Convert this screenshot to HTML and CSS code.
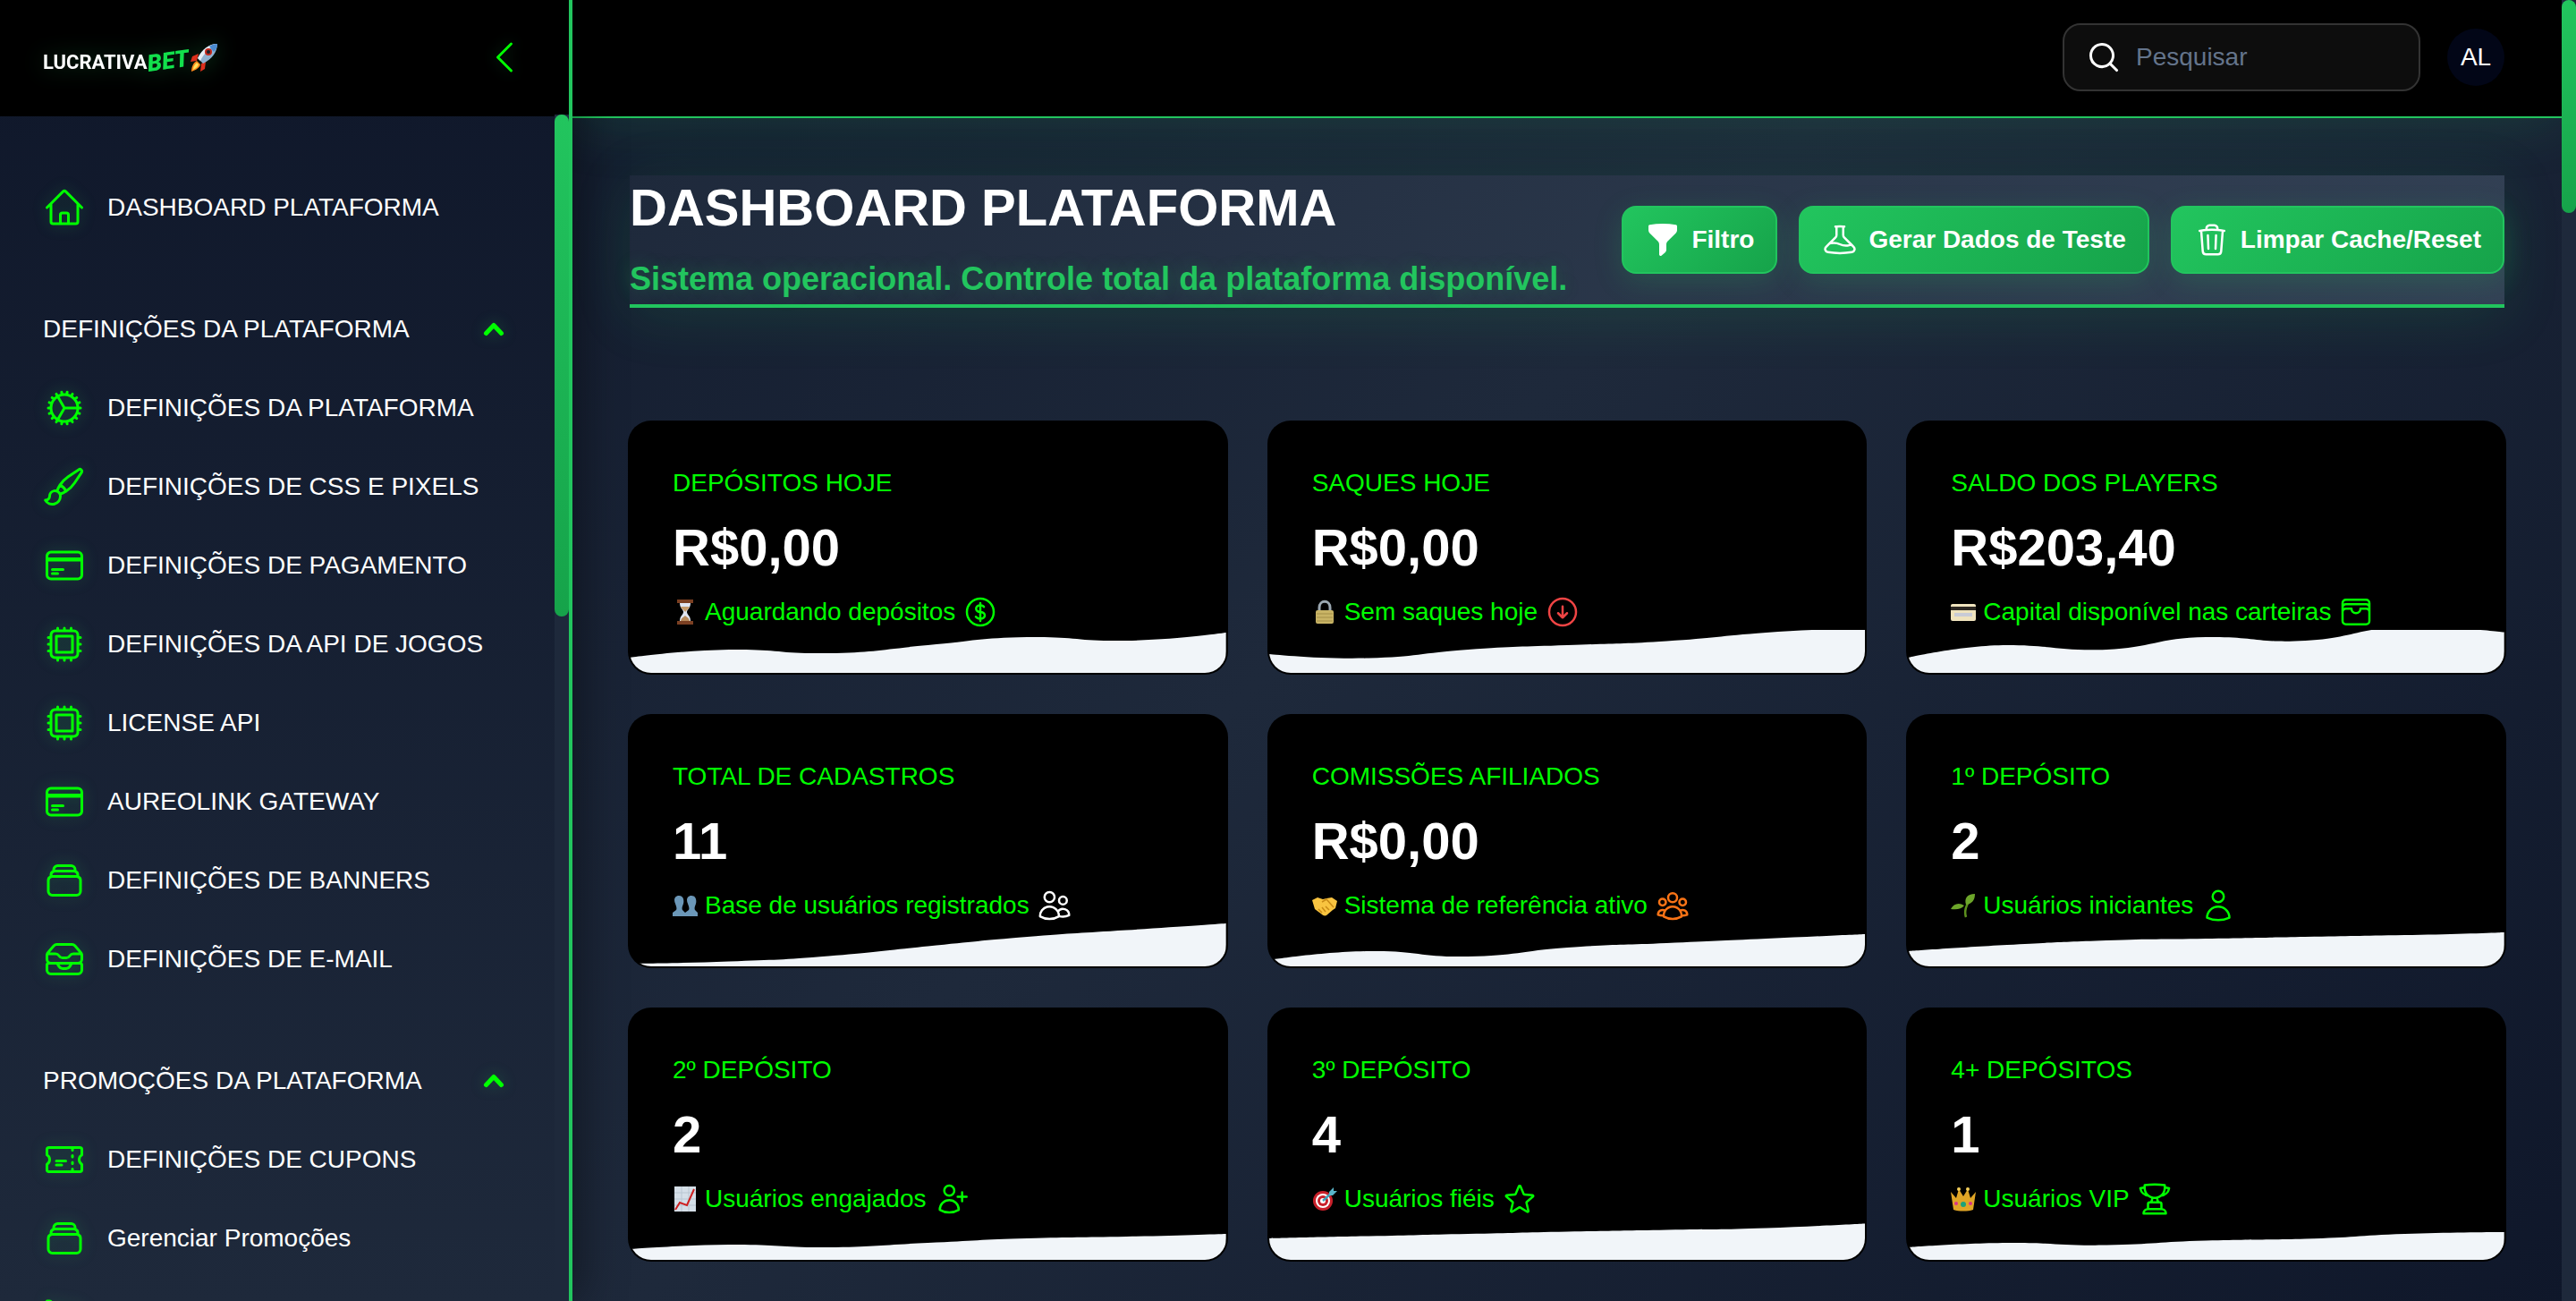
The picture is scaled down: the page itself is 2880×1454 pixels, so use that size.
FILE: index.html
```html
<!DOCTYPE html>
<html lang="pt-BR">
<head>
<meta charset="utf-8">
<meta name="viewport" content="width=device-width, initial-scale=1">
<title>Dashboard Plataforma</title>
<link rel="stylesheet" href="styles.css">
</head>
<body>
<svg class="sprite" aria-hidden="true">
  <symbol id="home" viewBox="0 0 24 24"><path d="M2.25 12l8.954-8.955c.44-.439 1.152-.439 1.591 0L21.75 12M4.5 9.75v10.125c0 .621.504 1.125 1.125 1.125H9.75v-4.875c0-.621.504-1.125 1.125-1.125h2.25c.621 0 1.125.504 1.125 1.125V21h4.125c.621 0 1.125-.504 1.125-1.125V9.75M8.25 21h8.25"/></symbol>
  <symbol id="cog" viewBox="0 0 24 24"><path d="M4.5 12a7.5 7.5 0 0015 0m-15 0a7.5 7.5 0 1115 0m-15 0H3m16.5 0H21m-1.5 0H12m-8.457 3.077l1.41-.513m14.095-5.13l1.41-.513M5.106 17.785l1.15-.964m11.49-9.642l1.149-.964M7.501 19.795l.75-1.3m7.5-12.99l.75-1.3m-6.063 16.658l.26-1.477m2.605-14.772l.26-1.477m0 17.726l-.26-1.477M10.698 4.614l-.26-1.477M16.5 19.794l-.75-1.299M7.5 4.205L12 12m6.894 5.785l-1.149-.964M6.256 7.178l-1.15-.964m15.352 8.864l-1.41-.513M4.954 9.435l-1.41-.514M12.002 12l-3.75 6.495"/></symbol>
  <symbol id="brush" viewBox="0 0 24 24"><path d="M9.53 16.122a3 3 0 00-5.78 1.128 2.25 2.25 0 01-2.4 2.245 4.5 4.5 0 008.4-2.245c0-.399-.078-.78-.22-1.128zm0 0a15.998 15.998 0 003.388-1.62m-5.043-.025a15.994 15.994 0 011.622-3.395m3.42 3.42a15.995 15.995 0 004.764-4.648l3.876-5.814a1.151 1.151 0 00-1.597-1.597L14.146 6.32a15.996 15.996 0 00-4.649 4.763m3.42 3.42a6.776 6.776 0 00-3.42-3.42"/></symbol>
  <symbol id="card" viewBox="0 0 24 24"><path d="M2.25 8.25h19.5M2.25 9h19.5m-16.5 5.25h6m-6 2.25h3m-3.75 3h15a2.25 2.25 0 002.25-2.25V6.75A2.25 2.25 0 0019.5 4.5h-15a2.25 2.25 0 00-2.25 2.25v10.5A2.25 2.25 0 004.5 19.5z"/></symbol>
  <symbol id="chip" viewBox="0 0 24 24"><path d="M8.25 3v1.5M4.5 8.25H3m18 0h-1.5M4.5 12H3m18 0h-1.5m-15 3.75H3m18 0h-1.5M8.25 19.5V21M12 3v1.5m0 15V21m3.75-18v1.5m0 15V21m-9-1.5h10.5a2.25 2.25 0 002.25-2.25V6.75a2.25 2.25 0 00-2.25-2.25H6.75A2.25 2.25 0 004.5 6.75v10.5a2.25 2.25 0 002.25 2.25zm.75-12h9v9h-9v-9z"/></symbol>
  <symbol id="stack" viewBox="0 0 24 24"><path d="M6 6.878V6a2.25 2.25 0 012.25-2.25h7.5A2.25 2.25 0 0118 6v.878m-12 0c.235-.083.487-.128.75-.128h10.5c.263 0 .515.045.75.128m-12 0A2.25 2.25 0 004.5 9v.878m13.5-3A2.25 2.25 0 0119.5 9v.878m0 0a2.246 2.246 0 00-.75-.128H5.25c-.263 0-.515.045-.75.128m15 0A2.25 2.25 0 0121 12v6a2.25 2.25 0 01-2.25 2.25H5.25A2.25 2.25 0 013 18v-6c0-.98.626-1.813 1.5-2.122"/></symbol>
  <symbol id="inbox" viewBox="0 0 24 24"><path d="M7.875 14.25l1.214 1.942a2.25 2.25 0 001.908 1.058h2.006c.776 0 1.497-.4 1.908-1.058l1.214-1.942M2.41 9h4.636a2.25 2.25 0 011.872 1.002l.164.246a2.25 2.25 0 001.872 1.002h2.092a2.25 2.25 0 001.872-1.002l.164-.246A2.25 2.25 0 0116.954 9h4.636M2.41 9a2.25 2.25 0 00-.16.832V12a2.25 2.25 0 002.25 2.25h15A2.25 2.25 0 0021.75 12V9.832c0-.287-.055-.57-.16-.832M2.41 9a2.25 2.25 0 01.382-.632l3.285-3.832a2.25 2.25 0 011.708-.786h8.43c.657 0 1.281.287 1.709.786l3.284 3.832c.163.19.291.404.382.632M4.5 20.25h15A2.25 2.25 0 0021.75 18v-2.625c0-.621-.504-1.125-1.125-1.125H3.375c-.621 0-1.125.504-1.125 1.125V18a2.25 2.25 0 002.25 2.25z"/></symbol>
  <symbol id="ticket" viewBox="0 0 24 24"><path d="M16.5 6v.75m0 3v.75m0 3v.75m0 3V18m-9-5.25h5.25M7.5 15h3M3.375 5.25c-.621 0-1.125.504-1.125 1.125v3.026a2.999 2.999 0 010 5.198v3.026c0 .621.504 1.125 1.125 1.125h17.25c.621 0 1.125-.504 1.125-1.125v-3.026a2.999 2.999 0 010-5.198V6.375c0-.621-.504-1.125-1.125-1.125H3.375z"/></symbol>
  <symbol id="cart" viewBox="0 0 24 24"><path d="M2.25 3h1.386c.51 0 .955.343 1.087.835l.383 1.437M7.5 14.25a3 3 0 00-3 3h15.75m-12.75-3h11.218c1.121-2.3 2.1-4.684 2.924-7.138a60.114 60.114 0 00-16.536-1.84M7.5 14.25L5.106 5.272"/></symbol>
  <symbol id="up" viewBox="0 0 20 20"><path d="M5.75 12.25L10 7.75l4.25 4.5"/></symbol>
  <symbol id="left" viewBox="0 0 24 24"><path d="M15.75 19.5L8.25 12l7.5-7.5"/></symbol>
  <symbol id="beaker" viewBox="0 0 24 24"><path d="M9.75 3.104v5.714a2.25 2.25 0 01-.659 1.591L5 14.5M9.75 3.104c-.251.023-.501.05-.75.082m.75-.082a24.301 24.301 0 014.5 0m0 0v5.714c0 .597.237 1.17.659 1.591L19.8 15.3M14.25 3.104c.251.023.501.05.75.082M19.8 15.3l-1.57.393A9.065 9.065 0 0112 15a9.065 9.065 0 00-6.23-.693L5 14.5m14.8.8l1.402 1.402c1.232 1.232.65 3.318-1.067 3.611A48.309 48.309 0 0112 21c-2.773 0-5.491-.235-8.135-.687-1.718-.293-2.3-2.379-1.067-3.61L5 14.5"/></symbol>
  <symbol id="trash" viewBox="0 0 24 24"><path d="M14.74 9l-.346 9m-4.788 0L9.26 9m9.968-3.21c.342.052.682.107 1.022.166m-1.022-.165L18.16 19.673a2.25 2.25 0 01-2.244 2.077H8.084a2.25 2.25 0 01-2.244-2.077L4.772 5.79m14.456 0a48.108 48.108 0 00-3.478-.397m-12 .562c.34-.059.68-.114 1.022-.165m0 0a48.11 48.11 0 013.478-.397m7.5 0v-.916c0-1.18-.91-2.164-2.09-2.201a51.964 51.964 0 00-3.32 0c-1.18.037-2.09 1.022-2.09 2.201v.916m7.5 0a48.667 48.667 0 00-7.5 0"/></symbol>
  <symbol id="dollar" viewBox="0 0 24 24"><path d="M12 6v12m-3-2.818l.879.659c1.171.879 3.07.879 4.242 0 1.172-.879 1.172-2.303 0-3.182C13.536 12.219 12.768 12 12 12c-.725 0-1.45-.22-2.003-.659-1.106-.879-1.106-2.303 0-3.182s2.9-.879 4.006 0l.415.33M21 12a9 9 0 11-18 0 9 9 0 0118 0z"/></symbol>
  <symbol id="down" viewBox="0 0 24 24"><path d="M9 12.75l3 3m0 0l3-3m-3 3v-7.5M21 12a9 9 0 11-18 0 9 9 0 0118 0z"/></symbol>
  <symbol id="wallet" viewBox="0 0 24 24"><path d="M21 12a2.25 2.25 0 00-2.25-2.25H15a3 3 0 11-6 0H5.25A2.25 2.25 0 003 12m18 0v6a2.25 2.25 0 01-2.25 2.25H5.25A2.25 2.25 0 013 18v-6m18 0V9M3 12V9m18 0a2.25 2.25 0 00-2.25-2.25H5.25A2.25 2.25 0 003 9m18 0V6a2.25 2.25 0 00-2.25-2.25H5.25A2.25 2.25 0 003 6v3"/></symbol>
  <symbol id="users" viewBox="0 0 24 24"><path d="M15 19.128a9.38 9.38 0 002.625.372 9.337 9.337 0 004.121-.952 4.125 4.125 0 00-7.533-2.493M15 19.128v-.003c0-1.113-.285-2.16-.786-3.07M15 19.128v.106A12.318 12.318 0 018.624 21c-2.331 0-4.512-.645-6.374-1.766l-.001-.109a6.375 6.375 0 0111.964-3.07M12 6.375a3.375 3.375 0 11-6.75 0 3.375 3.375 0 016.75 0zm8.25 2.25a2.625 2.625 0 11-5.25 0 2.625 2.625 0 015.25 0z"/></symbol>
  <symbol id="group" viewBox="0 0 24 24"><path d="M18 18.72a9.094 9.094 0 003.741-.479 3 3 0 00-4.682-2.72m.94 3.198l.001.031c0 .225-.012.447-.037.666A11.944 11.944 0 0112 21c-2.17 0-4.207-.576-5.963-1.584A6.062 6.062 0 016 18.719m12 0a5.971 5.971 0 00-.941-3.197m0 0A5.995 5.995 0 0012 12.75a5.995 5.995 0 00-5.058 2.772m0 0a3 3 0 00-4.681 2.72 8.986 8.986 0 003.74.477m.94-3.197a5.971 5.971 0 00-.94 3.197M15 6.75a3 3 0 11-6 0 3 3 0 016 0zm6 3a2.25 2.25 0 11-4.5 0 2.25 2.25 0 014.5 0zm-13.5 0a2.25 2.25 0 11-4.5 0 2.25 2.25 0 014.5 0z"/></symbol>
  <symbol id="user" viewBox="0 0 24 24"><path d="M15.75 6a3.75 3.75 0 11-7.5 0 3.75 3.75 0 017.5 0zM4.501 20.118a7.5 7.5 0 0114.998 0A17.933 17.933 0 0112 21.75c-2.676 0-5.216-.584-7.499-1.632z"/></symbol>
  <symbol id="plus" viewBox="0 0 24 24"><path d="M19 7.5v3m0 0v3m0-3h3m-3 0h-3m-2.25-4.125a3.375 3.375 0 11-6.75 0 3.375 3.375 0 016.75 0zM4 19.235v-.11a6.375 6.375 0 0112.75 0v.109A12.318 12.318 0 0110.374 21c-2.331 0-4.512-.645-6.374-1.766z"/></symbol>
  <symbol id="star" viewBox="0 0 24 24"><path d="M11.48 3.499a.562.562 0 011.04 0l2.125 5.111a.563.563 0 00.475.345l5.518.442c.499.04.701.663.321.988l-4.204 3.602a.563.563 0 00-.182.557l1.285 5.385a.562.562 0 01-.84.61l-4.725-2.885a.563.563 0 00-.586 0L6.982 20.54a.562.562 0 01-.84-.61l1.285-5.386a.562.562 0 00-.182-.557l-4.204-3.602a.563.563 0 01.321-.988l5.518-.442a.563.563 0 00.475-.345L11.48 3.5z"/></symbol>
  <symbol id="trophy" viewBox="0 0 24 24"><path d="M16.5 18.75h-9m9 0a3 3 0 013 3h-15a3 3 0 013-3m9 0v-3.375c0-.621-.503-1.125-1.125-1.125h-.871M7.5 18.75v-3.375c0-.621.504-1.125 1.125-1.125h.872m5.007 0H9.497m5.007 0a7.454 7.454 0 01-.982-3.172M9.497 14.25a7.454 7.454 0 00.981-3.172M5.25 4.236c-.982.143-1.954.317-2.916.52A6.003 6.003 0 007.73 9.728M5.25 4.236V4.5c0 2.108.966 3.99 2.48 5.228M5.25 4.236V2.721C7.456 2.41 9.71 2.25 12 2.25c2.291 0 4.545.16 6.75.47v1.516M7.73 9.728a6.726 6.726 0 002.748 1.35m8.272-6.842V4.5c0 2.108-.966 3.99-2.48 5.228m2.48-5.492a46.32 46.32 0 012.916.52 6.003 6.003 0 01-5.395 4.972m0 0a6.726 6.726 0 01-2.749 1.35m0 0a6.772 6.772 0 01-3.044 0"/></symbol>
</svg>

<div class="app">
  <aside class="sidebar">
    <header class="sidebar-header">
      <a class="logo" href="#" aria-label="Lucrativa Bet">
        <span class="logo-name">LUCRATIVA</span><span class="logo-bet">BET</span>
        <svg class="rocket" viewBox="0 0 34 34" aria-hidden="true">
          <path d="M11 13L4 16l-2 6 7-1zM19 22l-1 8-5 3 1-9z" fill="#dc2f1c"/>
          <path d="M9 21l4 4c-1 4-5 6-10 8 0-5 2-10 6-12z" fill="#ff8a1c"/>
          <path d="M9 23l2 2c-1 3-3 4-6 6 0-4 2-6 4-8z" fill="#ffe45c"/>
          <path d="M32 2c-9 0-17 6-22 16l6 6C26 19 32 11 32 2z" fill="#8fb0cf"/>
          <path d="M32 2c-9 0-17 6-22 16l3 3C17 13 23 7 32 2z" fill="#e6edf4"/>
          <path d="M32 2c-4 0-7 1-9 3l5 6c3-3 4-6 4-9z" fill="#4b8bd0"/>
          <circle cx="22" cy="11" r="4" fill="#c3281b"/><circle cx="22" cy="11" r="2" fill="#16202c"/>
        </svg>
      </a>
      <button class="collapse" aria-label="Recolher menu"><svg class="icon-lg"><use href="#left"/></svg></button>
    </header>
    <div class="sidebar-body">
      <nav class="nav" aria-label="Menu principal">
        <ul class="nav-group">
          <li><a class="nav-item" href="#"><svg class="icon-lg"><use href="#home"/></svg>DASHBOARD PLATAFORMA</a></li>
        </ul>
        <section class="nav-section">
          <button class="nav-heading" aria-expanded="true">DEFINIÇÕES DA PLATAFORMA<svg class="chevron"><use href="#up"/></svg></button>
          <ul class="nav-group">
            <li><a class="nav-item" href="#"><svg class="icon-lg"><use href="#cog"/></svg>DEFINIÇÕES DA PLATAFORMA</a></li>
            <li><a class="nav-item" href="#"><svg class="icon-lg"><use href="#brush"/></svg>DEFINIÇÕES DE CSS E PIXELS</a></li>
            <li><a class="nav-item" href="#"><svg class="icon-lg"><use href="#card"/></svg>DEFINIÇÕES DE PAGAMENTO</a></li>
            <li><a class="nav-item" href="#"><svg class="icon-lg"><use href="#chip"/></svg>DEFINIÇÕES DA API DE JOGOS</a></li>
            <li><a class="nav-item" href="#"><svg class="icon-lg"><use href="#chip"/></svg>LICENSE API</a></li>
            <li><a class="nav-item" href="#"><svg class="icon-lg"><use href="#card"/></svg>AUREOLINK GATEWAY</a></li>
            <li><a class="nav-item" href="#"><svg class="icon-lg"><use href="#stack"/></svg>DEFINIÇÕES DE BANNERS</a></li>
            <li><a class="nav-item" href="#"><svg class="icon-lg"><use href="#inbox"/></svg>DEFINIÇÕES DE E-MAIL</a></li>
          </ul>
        </section>
        <section class="nav-section">
          <button class="nav-heading" aria-expanded="true">PROMOÇÕES DA PLATAFORMA<svg class="chevron"><use href="#up"/></svg></button>
          <ul class="nav-group">
            <li><a class="nav-item" href="#"><svg class="icon-lg"><use href="#ticket"/></svg>DEFINIÇÕES DE CUPONS</a></li>
            <li><a class="nav-item" href="#"><svg class="icon-lg"><use href="#stack"/></svg>Gerenciar Promoções</a></li>
            <li><a class="nav-item" href="#" aria-label="Loja"><svg class="icon-lg"><use href="#cart"/></svg></a></li>
          </ul>
        </section>
      </nav>
      <div class="rail"><div class="thumb thumb-menu"></div></div>
    </div>
  </aside>

  <div class="page">
    <header class="topbar">
      <label class="search">
        <svg class="icon search-icon" viewBox="0 0 20 20" aria-hidden="true"><path d="M9 3.5a5.5 5.5 0 100 11 5.5 5.5 0 000-11zM2 9a7 7 0 1112.452 4.391l3.328 3.329a.75.75 0 11-1.06 1.06l-3.329-3.328A7 7 0 012 9z"/></svg>
        <input type="search" placeholder="Pesquisar" aria-label="Pesquisar">
      </label>
      <button class="avatar">AL</button>
    </header>

    <main class="content">
      <header class="page-header">
        <div>
          <h1>DASHBOARD PLATAFORMA</h1>
          <p class="subtitle">Sistema operacional. Controle total da plataforma disponível.</p>
        </div>
        <div class="actions">
          <button class="btn"><svg class="icon solid" viewBox="0 0 20 20"><path d="M2.628 1.601C5.028 1.206 7.49 1 10 1s4.973.206 7.372.601a.75.75 0 01.628.74v2.288a2.25 2.25 0 01-.659 1.59l-4.682 4.683a2.25 2.25 0 00-.659 1.59v3.037c0 .684-.31 1.33-.844 1.757l-1.937 1.55A.75.75 0 018 18.25v-5.757a2.25 2.25 0 00-.659-1.591L2.659 6.22A2.25 2.25 0 012 4.629V2.34a.75.75 0 01.628-.74z"/></svg>Filtro</button>
          <button class="btn"><svg class="icon"><use href="#beaker"/></svg>Gerar Dados de Teste</button>
          <button class="btn"><svg class="icon"><use href="#trash"/></svg>Limpar Cache/Reset</button>
        </div>
      </header>

      <section class="stats" aria-label="Estatísticas">
        <article class="stat">
          <h2>DEPÓSITOS HOJE</h2>
          <p class="value">R$0,00</p>
          <p class="note">
            <svg class="emoji" viewBox="0 0 28 28"><path d="M8 4h12c0 6-4 7-4 10s4 4 4 10H8c0-6 4-7 4-10S8 10 8 4z" fill="#dfe5f2"/><path d="M9 8h10c-1 3-4 4-5 6-1-2-4-3-5-6z" fill="#c49a6c"/><path d="M9 24c1-4 3-4 5-6 2 2 4 2 5 6z" fill="#b78a5c"/><path d="M5 0h18v4H5zM5 24h18v4H5z" fill="#7b3f22"/></svg>
            <span>Aguardando depósitos</span><svg class="icon"><use href="#dollar"/></svg></p>
          <svg class="wave" viewBox="0 0 666 48" preserveAspectRatio="none"><path d="M0 31C0 31 56 23 111 22S167 27 222 26 278 22 333 17 389 9 444 8 500 13 555 12 666 3 666 3V48H0Z"/></svg>
        </article>
        <article class="stat">
          <h2>SAQUES HOJE</h2>
          <p class="value">R$0,00</p>
          <p class="note">
            <svg class="emoji" viewBox="0 0 28 28"><path d="M8 13V9c0-9 12-9 12 0v4" fill="none" stroke="#9aa7b0" stroke-width="3"/><rect x="4" y="12" width="20" height="15" rx="2" fill="#c9b465"/><path d="M5 16h18M5 20h18M5 24h18" stroke="#a38f48"/></svg>
            <span>Sem saques hoje</span><svg class="icon red"><use href="#down"/></svg></p>
          <svg class="wave" viewBox="0 0 666 48" preserveAspectRatio="none"><path d="M0 27C0 27 56 33 111 31.5S167 26 222 22 278 19 333 17 389 16 444 12.5 500 7 555 3 666 -2 666 -2V48H0Z"/></svg>
        </article>
        <article class="stat">
          <h2>SALDO DOS PLAYERS</h2>
          <p class="value">R$203,40</p>
          <p class="note">
            <svg class="emoji" viewBox="0 0 28 28"><rect y="5" width="28" height="19" rx="2" fill="#efe3bd"/><path d="M0 8h28v4H0z" fill="#2b2621"/><path d="M4 15h20v4H4z" fill="#c8cbd6"/></svg>
            <span>Capital disponível nas carteiras</span><svg class="icon"><use href="#wallet"/></svg></p>
          <svg class="wave" viewBox="0 0 666 48" preserveAspectRatio="none"><path d="M0 31C0 31 61 17 111 17S172 24 222 22 278 9 333 8 389 15 444 12 500 -2 555 -3 666 2.500 666 2.500V48H0Z"/></svg>
        </article>
        <article class="stat">
          <h2>TOTAL DE CADASTROS</h2>
          <p class="value">11</p>
          <p class="note">
            <svg class="emoji" viewBox="0 0 28 28"><path d="M7 3c5 0 6 5 5 9-1 3-2 5-1 7l3 3v4H0v-4l4-3c1-2 0-4-1-7C1 8 2 3 7 3zM21 3c5 0 6 5 5 9-1 3-2 5-1 7l3 3v4H14v-4l4-3c1-2 0-4-1-7-2-4-1-9 4-9z" fill="#6b97b8"/></svg>
            <span>Base de usuários registrados</span><svg class="icon white"><use href="#users"/></svg></p>
          <svg class="wave" viewBox="0 0 666 48" preserveAspectRatio="none"><path d="M0 45C0 45 56 44.600 111 42.500S167 41 222 36.500 278 31 333 25.500 389 19.500 444 15 500 11 555 7.500 666 0 666 0V48H0Z"/></svg>
        </article>
        <article class="stat">
          <h2>COMISSÕES AFILIADOS</h2>
          <p class="value">R$0,00</p>
          <p class="note">
            <svg class="emoji" viewBox="0 0 28 28"><path d="M0 8l6-3 6 2 4-1 6-1 6 4-2 8-3 2-7 6c-2 1-4 0-5-1L3 18z" fill="#f9c440"/><path d="M11 10l5-3 8 9M7 18l4 4M11 16l4 5M15 15l4 4" fill="none" stroke="#c98a16" stroke-width="1.500"/></svg>
            <span>Sistema de referência ativo</span><svg class="icon orange"><use href="#group"/></svg></p>
          <svg class="wave" viewBox="0 0 666 48" preserveAspectRatio="none"><path d="M0 41C0 41 56 32 111 31S167 38 222 37 278 31 333 27 389 24.500 444 22 500 19.500 555 17 666 12 666 12V48H0Z"/></svg>
        </article>
        <article class="stat">
          <h2>1º DEPÓSITO</h2>
          <p class="value">2</p>
          <p class="note">
            <svg class="emoji" viewBox="0 0 28 28"><path d="M17 27c-2-6-1-12 5-20" fill="none" stroke="#5c8f1e" stroke-width="2.500"/><path d="M27 1c-9 0-12 5-10 12 7-1 10-5 10-12zM0 18c3-6 9-8 15-4-3 4-8 5-15 4z" fill="#6da62a"/></svg>
            <span>Usuários iniciantes</span><svg class="icon"><use href="#user"/></svg></p>
          <svg class="wave" viewBox="0 0 666 48" preserveAspectRatio="none"><path d="M0 31C0 31 56 27 111 24S167 21 222 19 278 18 333 17 389 16 444 15 500 14 555 13 666 10 666 10V48H0Z"/></svg>
        </article>
        <article class="stat">
          <h2>2º DEPÓSITO</h2>
          <p class="value">2</p>
          <p class="note">
            <svg class="emoji" viewBox="0 0 28 28"><path d="M2 0h24v28H2z" fill="#d5dfe8"/><path d="M2 7h24M2 14h24M2 21h24M10 0v28M18 0v28" stroke="#b9c6d2"/><path d="M3 26l5-8 8 3 8-18" fill="none" stroke="#cf2020" stroke-width="2"/></svg>
            <span>Usuários engajados</span><svg class="icon"><use href="#plus"/></svg></p>
          <svg class="wave" viewBox="0 0 666 48" preserveAspectRatio="none"><path d="M0 36C0 36 56 31.500 111 31S167 34.500 222 34 278 31.500 333 29 389 25.500 444 24 500 23 555 22 666 19 666 19V48H0Z"/></svg>
        </article>
        <article class="stat">
          <h2>3º DEPÓSITO</h2>
          <p class="value">4</p>
          <p class="note">
            <svg class="emoji" viewBox="0 0 28 28"><circle cx="12" cy="16" r="11" fill="#c8202a"/><circle cx="12" cy="16" r="8" fill="#fff"/><circle cx="12" cy="16" r="6" fill="#c8202a"/><circle cx="12" cy="16" r="3" fill="#fff"/><path d="M12 16L23 6" stroke="#3c9fb8" stroke-width="2.500"/><path d="M19 6l5-5v4h4l-5 5h-4z" fill="#5ab4c9"/></svg>
            <span>Usuários fiéis</span><svg class="icon"><use href="#star"/></svg></p>
          <svg class="wave" viewBox="0 0 666 48" preserveAspectRatio="none"><path d="M0 24C0 24 56 22.500 111 21.500S167 20 222 19 278 17.500 333 16.500 389 15.500 444 14.500 500 14.500 555 12.500 666 7.500 666 7.500V48H0Z"/></svg>
        </article>
        <article class="stat">
          <h2>4+ DEPÓSITOS</h2>
          <p class="value">1</p>
          <p class="note">
            <svg class="emoji" viewBox="0 0 28 28"><path d="M0 6l6 7 3-10 5 8 5-8 3 10 6-7-3 20c-6 2-16 2-22 0z" fill="#e0a526"/><circle cx="9" cy="3" r="2" fill="#f5cf5a"/><circle cx="19" cy="3" r="2" fill="#f5cf5a"/><circle cx="14" cy="20" r="3" fill="#1ba37a"/><circle cx="6" cy="19" r="2" fill="#d9348a"/><circle cx="22" cy="19" r="2" fill="#d9348a"/></svg>
            <span>Usuários VIP</span><svg class="icon"><use href="#trophy"/></svg></p>
          <svg class="wave" viewBox="0 0 666 48" preserveAspectRatio="none"><path d="M0 34C0 34 56 29.500 111 29S167 32.500 222 31.500 278 28 333 26.500 389 26 444 24.500 500 21 555 19 666 17 666 17V48H0Z"/></svg>
        </article>
      </section>
    </main>
  </div>
  <div class="rail rail-page"><div class="thumb thumb-page"></div></div>
</div>
</body>
</html>
```
FILE: styles.css
```css
:root {
  --green: #22c55e;
  --green-dark: #16a34a;
  --neon: #00ff00;
  --slate-900: #0f172a;
  --slate-800: #1e293b;
  --slate-700: #334155;
}

* { box-sizing: border-box; margin: 0; padding: 0; }

body {
  font: 28px/40px "Liberation Sans", Arial, sans-serif;
  color: #fff;
  background: var(--slate-900);
}

button, input { font: inherit; color: inherit; background: none; border: 0; }
button { cursor: pointer; }
a { color: inherit; text-decoration: none; }
ul { list-style: none; }

.sprite { position: absolute; width: 0; height: 0; }

.icon, .icon-lg, .chevron {
  flex: none;
  fill: none;
  stroke: currentColor;
  stroke-width: 1.5;
  stroke-linecap: round;
  stroke-linejoin: round;
}
.icon { width: 40px; height: 40px; }
.icon-lg { width: 48px; height: 48px; }
.icon.solid { fill: currentColor; stroke: none; }

.app {
  display: flex;
  height: 100vh;
  overflow: hidden;
  background: linear-gradient(135deg, var(--slate-900), var(--slate-800) 50%, var(--slate-900));
}

/* Sidebar */
.sidebar {
  position: relative;
  z-index: 2;
  display: flex;
  flex-direction: column;
  flex: none;
  width: 640px;
  border-right: 4px solid var(--green);
  background: linear-gradient(180deg, var(--slate-900), var(--slate-800));
  box-shadow: 8px 0 48px rgba(0, 0, 0, .4);
}
.sidebar-header {
  display: flex;
  align-items: center;
  justify-content: space-between;
  flex: none;
  height: 128px;
  padding: 0 48px;
  background: #000;
  box-shadow: 0 2px #000;
}
.logo {
  display: flex;
  align-items: center;
  font-family: Roboto, "Liberation Sans", sans-serif;
  filter: drop-shadow(0 0 12px rgba(34, 197, 94, .3));
}
.logo-name { font-size: 22px; font-weight: 700; padding-top: 12px; }
.logo-bet {
  font-size: 26px;
  font-weight: 900;
  font-style: italic;
  color: #12e04c;
  padding-top: 8px;
  rotate: -8deg;
}
.rocket { width: 34px; height: 34px; }
.collapse { display: flex; color: var(--neon); filter: drop-shadow(0 0 8px rgba(34, 197, 94, .3)); }

.sidebar-body { display: flex; flex: 1; min-height: 0; }
.nav {
  display: flex;
  flex-direction: column;
  gap: 56px;
  flex: 1;
  padding: 64px 48px;
  overflow: hidden;
}
.nav-section, .nav-group { display: flex; flex-direction: column; gap: 8px; flex: none; }
.nav-item, .nav-heading { display: flex; align-items: center; height: 80px; white-space: nowrap; }
.nav-item { gap: 24px; }
.nav-heading { justify-content: space-between; }
.nav svg { color: var(--neon); filter: drop-shadow(0 0 8px rgba(34, 197, 94, .3)); }
.chevron { width: 40px; height: 40px; stroke-width: 2.5; }

.rail { position: relative; flex: none; width: 16px; background: var(--slate-800); }
.rail-page { z-index: 3; }
.thumb { border-radius: 8px; background: linear-gradient(180deg, var(--green), var(--green-dark)); }
.thumb-menu { height: 42.3%; }
.thumb-page { height: 16.4%; }

/* Page */
.page { flex: 1; min-width: 0; }
.topbar {
  display: flex;
  align-items: center;
  justify-content: flex-end;
  gap: 30px;
  height: 132px;
  padding: 0 64px;
  padding-bottom: 2px;
  background: #000;
  border-bottom: 2px solid var(--green);
  box-shadow: 0 8px 64px rgba(34, 197, 94, .15);
}
.search {
  display: flex;
  align-items: center;
  gap: 16px;
  width: 400px;
  height: 76px;
  padding: 0 24px;
  border: 2px solid #333;
  border-radius: 20px;
  background: #0d0d0d;
}
.search-icon { fill: currentColor; stroke: none; }
.search input { flex: 1; min-width: 0; outline: 0; }
.search input::placeholder { color: #64748b; opacity: 1; }
.avatar { width: 64px; height: 64px; border-radius: 50%; background: #020617; }

.content { display: flex; flex-direction: column; gap: 128px; padding: 64px; }
.page-header {
  display: flex;
  align-items: center;
  justify-content: space-between;
  gap: 32px;
  border-bottom: 4px solid var(--green);
  background: linear-gradient(135deg, var(--slate-800), var(--slate-700));
  box-shadow: 0 8px 64px rgba(34, 197, 94, .15);
}
h1 { font-size: 58px; line-height: 72px; font-weight: 700; }
.subtitle {
  margin-top: 16px;
  font-size: 36px;
  line-height: 56px;
  font-weight: 700;
  color: var(--green);
  text-shadow: 0 0 20px rgba(34, 197, 94, .3);
}
.actions { display: flex; gap: 24px; }
.btn {
  display: flex;
  align-items: center;
  gap: 12px;
  height: 76px;
  padding: 0 24px;
  border: 2px solid var(--green);
  border-radius: 16px;
  background: linear-gradient(135deg, var(--green), var(--green-dark));
  font-weight: 700;
  white-space: nowrap;
  box-shadow: 0 8px 32px rgba(34, 197, 94, .2);
}

.stats { display: grid; grid-template-columns: repeat(3, minmax(0, 1fr)); gap: 48px; }
.stat {
  position: relative;
  display: flex;
  flex-direction: column;
  gap: 16px;
  padding: 48px;
  border-radius: 24px;
  background: #000;
  box-shadow: 0 0 0 2px #000;
  overflow: hidden;
}
.stat h2 { font-size: 28px; font-weight: 400; color: var(--neon); }
.value { font-size: 58px; line-height: 72px; font-weight: 700; }
.note { display: flex; align-items: center; gap: 8px; color: var(--neon); white-space: nowrap; }
.emoji { flex: none; width: 28px; height: 28px; }
.icon.red { color: #ef4444; }
.icon.orange { color: #f97316; }
.icon.white { color: #fff; }
.wave { position: absolute; left: 0; bottom: 0; width: 100%; height: 48px; fill: #f1f5f9; }
```
